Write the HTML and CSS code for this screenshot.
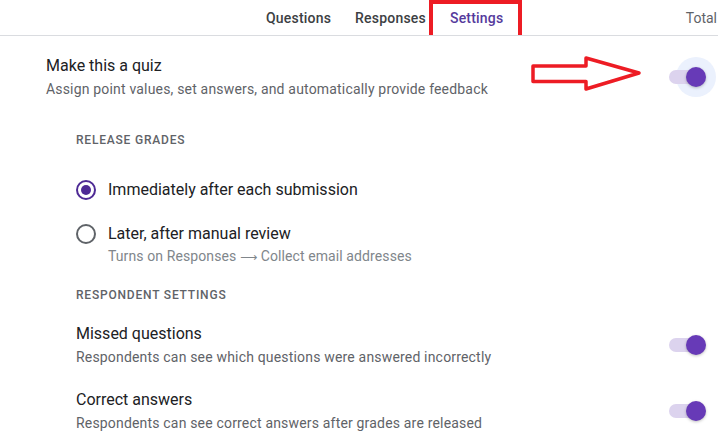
FILE: index.html
```html
<!DOCTYPE html>
<html>
<head>
<meta charset="utf-8">
<link rel="stylesheet" href="styles.css">
</head>
<body>
<header class="tabs">
  <div class="tab">Questions</div>
  <div class="tab">Responses</div>
  <div class="tab tab-active">Settings</div>
  <div class="total">Total</div>
</header>
<main class="page">
  <section class="quiz-row">
    <div class="text-block">
      <div class="title">Make this a quiz</div>
      <div class="subtitle">Assign point values, set answers, and automatically provide feedback</div>
    </div>
    <svg class="arrow" width="120" height="40" viewBox="0 0 120 40">
      <polygon points="3,11 56,11 56,3 109,18 56,34 56,26.5 3,26.5" fill="none" stroke="#ed1c24" stroke-width="3.5" stroke-linejoin="round"/>
    </svg>
    <div class="toggle toggle-focus"><span class="track"></span><span class="thumb"></span></div>
  </section>

  <section class="group">
    <div class="group-head">RELEASE GRADES</div>
    <div class="radios">
      <div class="radio-row">
        <span class="radio radio-on"></span>
        <span class="radio-label">Immediately after each submission</span>
      </div>
      <div class="radio-row radio-row-second">
        <span class="radio"></span>
        <div class="radio-text">
          <span class="radio-label">Later, after manual review</span>
          <span class="hint">Turns on Responses <span class="hint-arrow">⟶</span> Collect email addresses</span>
        </div>
      </div>
    </div>
  </section>

  <section class="group group-second">
    <div class="group-head">RESPONDENT SETTINGS</div>
    <div class="setting">
      <div class="text-block">
        <div class="title">Missed questions</div>
        <div class="subtitle">Respondents can see which questions were answered incorrectly</div>
      </div>
      <div class="toggle"><span class="track"></span><span class="thumb"></span></div>
    </div>
    <div class="setting setting-next">
      <div class="text-block">
        <div class="title">Correct answers</div>
        <div class="subtitle">Respondents can see correct answers after grades are released</div>
      </div>
      <div class="toggle"><span class="track"></span><span class="thumb"></span></div>
    </div>
  </section>
</main>
</body>
</html>
```
FILE: styles.css
```css
* { box-sizing: border-box; }
html, body {
  margin: 0;
  padding: 0;
  background: #ffffff;
  width: 718px;
  height: 446px;
  overflow: hidden;
  font-family: Roboto, "Liberation Sans", Arial, sans-serif;
  color: #202124;
}

.tabs {
  display: flex;
  align-items: center;
  height: 36px;
  border-bottom: 1px solid #dadce0;
  padding-left: 254px;
  white-space: nowrap;
  overflow: hidden;
  font-size: 14px;
  line-height: 20px;
}
.tab {
  padding: 0 12px;
  font-weight: 500;
  letter-spacing: 0.2px;
  color: #3c4043;
}
.tab-active {
  position: relative;
  color: #553a9c;
}
.tab-active::after {
  content: "";
  position: absolute;
  left: -9px;
  right: -7px;
  top: -8px;
  height: 37px;
  border: 4px solid #ed1c24;
}
.total {
  margin-left: auto;
  padding-right: 1px;
  color: #5f6368;
  font-size: 14px;
}

.page {
  display: flex;
  flex-direction: column;
}

.quiz-row {
  position: relative;
  display: flex;
  align-items: center;
  justify-content: space-between;
  padding: 18px 12px 0 46px;
}
.title {
  font-size: 16px;
  line-height: 24px;
  color: #202124;
}
.subtitle {
  margin-top: 1px;
  font-size: 14px;
  line-height: 20px;
  color: #5f6368;
  letter-spacing: 0.18px;
}
.arrow {
  position: absolute;
  left: 530px;
  top: 19px;
}

.toggle {
  position: relative;
  width: 37px;
  height: 20px;
  flex: none;
}
.track {
  position: absolute;
  left: 0;
  top: 3px;
  width: 34px;
  height: 14px;
  border-radius: 7px;
  background: #dcd3ee;
}
.thumb {
  position: absolute;
  right: 0;
  top: 0;
  width: 20px;
  height: 20px;
  border-radius: 50%;
  background: #673ab7;
  box-shadow: 0 1px 3px rgba(0,0,0,0.25);
}
.toggle-focus::before {
  content: "";
  position: absolute;
  right: -10px;
  top: -10px;
  width: 40px;
  height: 40px;
  border-radius: 50%;
  background: #ebf1fd;
}

.group {
  display: flex;
  flex-direction: column;
  padding: 33px 12px 0 76px;
}
.group-second { padding-top: 20px; }
.group-head {
  font-size: 12px;
  line-height: 16px;
  font-weight: 500;
  letter-spacing: 0.8px;
  color: #5f6368;
}

.radios {
  display: flex;
  flex-direction: column;
  padding-top: 30px;
}
.radio-row {
  display: flex;
  align-items: flex-start;
  gap: 12px;
}
.radio-row-second { margin-top: 20px; }
.radio {
  flex: none;
  width: 20px;
  height: 20px;
  margin-top: 2px;
  border-radius: 50%;
  border: 2px solid #5f6368;
  display: flex;
  align-items: center;
  justify-content: center;
}
.radio-on { border-color: #4e2a95; }
.radio-on::after {
  content: "";
  width: 10px;
  height: 10px;
  border-radius: 50%;
  background: #4e2a95;
}
.radio-label {
  font-size: 16px;
  line-height: 24px;
  color: #202124;
}
.radio-text {
  display: flex;
  flex-direction: column;
}
.hint {
  font-size: 14px;
  line-height: 20px;
  color: #80868b;
  letter-spacing: 0.1px;
}
.hint-arrow {
  font-family: "DejaVu Sans", sans-serif;
  font-size: 12px;
  letter-spacing: 0;
}

.setting {
  display: flex;
  align-items: center;
  justify-content: space-between;
  padding-top: 19px;
}
.setting-next { padding-top: 21px; }
```
